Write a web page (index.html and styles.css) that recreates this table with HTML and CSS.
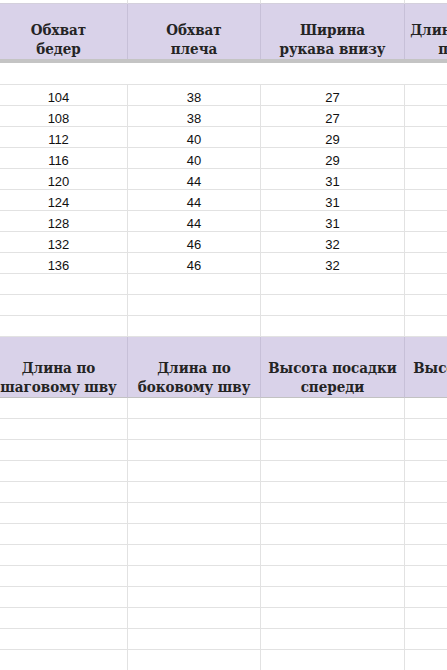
FILE: index.html
```html
<!DOCTYPE html>
<html lang="ru">
<head>
<meta charset="utf-8">
<title>Таблица размеров</title>
<link rel="stylesheet" href="styles.css">
</head>
<body>
<div class="sheet">
  <div class="row top"><div class="c"></div><div class="c"></div><div class="c"></div><div class="c"></div></div>
  <div class="row head h1">
    <div class="c">Обхват<br>бедер</div>
    <div class="c">Обхват<br>плеча</div>
    <div class="c">Ширина<br>рукава внизу</div>
    <div class="c">Длина по спинке<br>по центру</div>
  </div>
  <div class="freeze"></div>
  <div class="blank"></div>
  <div class="row data"><div class="c">104</div><div class="c">38</div><div class="c">27</div><div class="c"></div></div>
  <div class="row data"><div class="c">108</div><div class="c">38</div><div class="c">27</div><div class="c"></div></div>
  <div class="row data"><div class="c">112</div><div class="c">40</div><div class="c">29</div><div class="c"></div></div>
  <div class="row data"><div class="c">116</div><div class="c">40</div><div class="c">29</div><div class="c"></div></div>
  <div class="row data"><div class="c">120</div><div class="c">44</div><div class="c">31</div><div class="c"></div></div>
  <div class="row data"><div class="c">124</div><div class="c">44</div><div class="c">31</div><div class="c"></div></div>
  <div class="row data"><div class="c">128</div><div class="c">44</div><div class="c">31</div><div class="c"></div></div>
  <div class="row data"><div class="c">132</div><div class="c">46</div><div class="c">32</div><div class="c"></div></div>
  <div class="row data"><div class="c">136</div><div class="c">46</div><div class="c">32</div><div class="c"></div></div>
  <div class="row data"><div class="c"></div><div class="c"></div><div class="c"></div><div class="c"></div></div>
  <div class="row data"><div class="c"></div><div class="c"></div><div class="c"></div><div class="c"></div></div>
  <div class="row data"><div class="c"></div><div class="c"></div><div class="c"></div><div class="c"></div></div>
  <div class="row head h2">
    <div class="c">Длина по<br>шаговому шву</div>
    <div class="c">Длина по<br>боковому шву</div>
    <div class="c">Высота посадки<br>спереди</div>
    <div class="c">Высота посадки<br>сзади</div>
  </div>
  <div class="row data"><div class="c"></div><div class="c"></div><div class="c"></div><div class="c"></div></div>
  <div class="row data"><div class="c"></div><div class="c"></div><div class="c"></div><div class="c"></div></div>
  <div class="row data"><div class="c"></div><div class="c"></div><div class="c"></div><div class="c"></div></div>
  <div class="row data"><div class="c"></div><div class="c"></div><div class="c"></div><div class="c"></div></div>
  <div class="row data"><div class="c"></div><div class="c"></div><div class="c"></div><div class="c"></div></div>
  <div class="row data"><div class="c"></div><div class="c"></div><div class="c"></div><div class="c"></div></div>
  <div class="row data"><div class="c"></div><div class="c"></div><div class="c"></div><div class="c"></div></div>
  <div class="row data"><div class="c"></div><div class="c"></div><div class="c"></div><div class="c"></div></div>
  <div class="row data"><div class="c"></div><div class="c"></div><div class="c"></div><div class="c"></div></div>
  <div class="row data"><div class="c"></div><div class="c"></div><div class="c"></div><div class="c"></div></div>
  <div class="row data"><div class="c"></div><div class="c"></div><div class="c"></div><div class="c"></div></div>
  <div class="row data"><div class="c"></div><div class="c"></div><div class="c"></div><div class="c"></div></div>
  <div class="row data"><div class="c"></div><div class="c"></div><div class="c"></div><div class="c"></div></div>
</div>
</body>
</html>
```

FILE: styles.css
```css
html, body {
  margin: 0;
  padding: 0;
  background: #ffffff;
  overflow: hidden;
}

.sheet {
  margin-left: -10px;
  width: 561px;
}

.row {
  display: grid;
  grid-template-columns: 138px 133px 144px 146px;
}

.c {
  box-sizing: border-box;
  border-right: 1px solid #e2e2e2;
  border-bottom: 1px solid #e2e2e2;
  white-space: nowrap;
}

.top .c {
  height: 4px;
  border-bottom-color: #d4d0dc;
}

.head .c {
  background: #d9d2e9;
  border-right-color: #c7c0d8;
  border-bottom: none;
  display: flex;
  align-items: flex-end;
  justify-content: center;
  text-align: center;
  font-family: "DejaVu Serif Condensed", "DejaVu Serif", "Liberation Serif", serif;
  font-stretch: condensed;
  font-weight: bold;
  font-size: 15px;
  line-height: 19px;
  color: #242424;
  overflow: hidden;
}

.h1 .c {
  height: 55px;
}

.h2 .c {
  height: 61px;
  border-bottom: 1px solid #c2c2c2;
}

.freeze {
  height: 4px;
  background: #c4c4c4;
}

.blank {
  box-sizing: border-box;
  height: 22px;
  border-bottom: 1px solid #e2e2e2;
}

.data .c {
  height: 21px;
  display: flex;
  align-items: flex-end;
  justify-content: center;
  font-family: "Liberation Sans", Arial, sans-serif;
  font-size: 13px;
  line-height: 14px;
  color: #111;
}
```
